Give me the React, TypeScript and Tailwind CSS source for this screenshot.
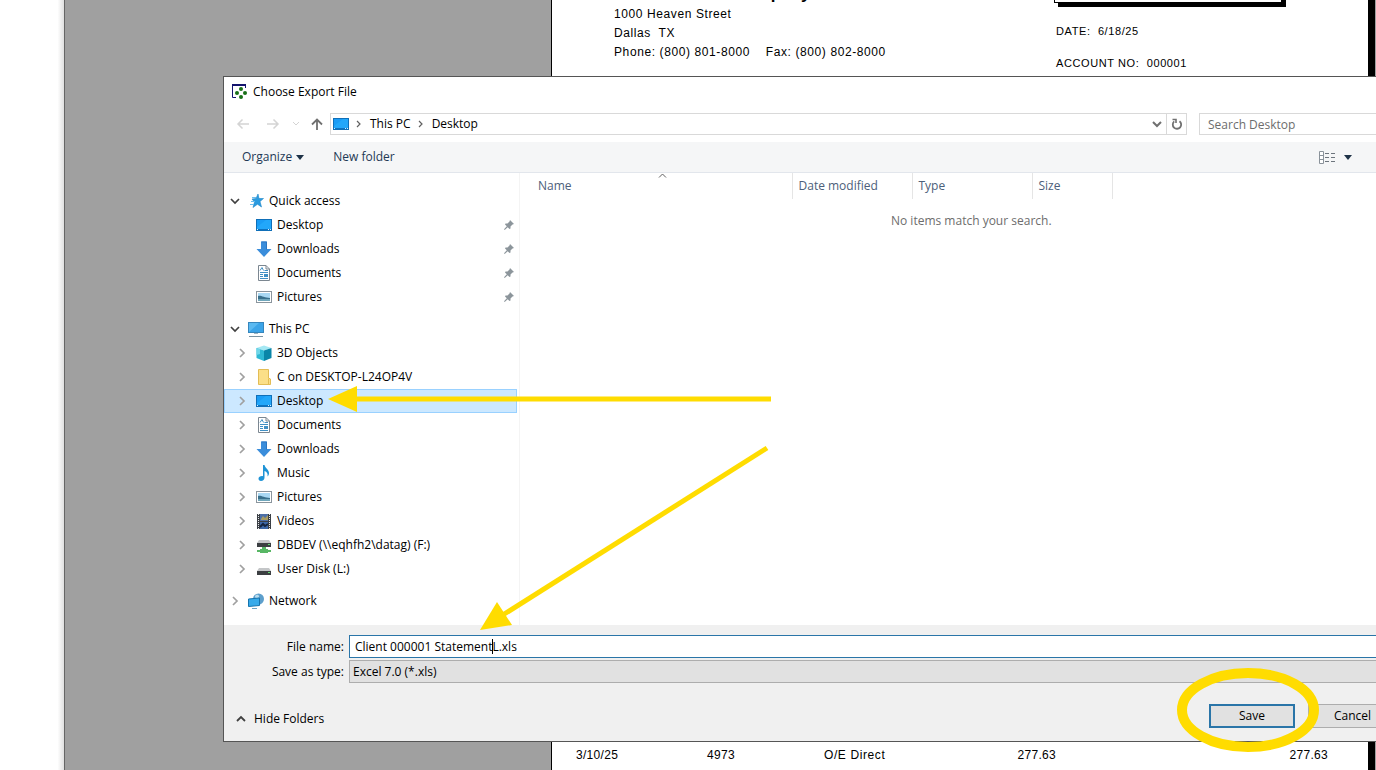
import type { ReactNode } from "react";

type Item = {
  label: string;
  icon: ReactNode;
};

function DesktopIcon() {
  return (
    <svg width="16" height="16" viewBox="0 0 16 16" className="shrink-0">
      <rect x="0.5" y="2.5" width="15" height="11" fill="#1a9cf5" stroke="#0f6fb8" />
      <path d="M1 10 L10 3 H15 V12 H1Z" fill="#22a7fa" />
      <path d="M1 12.5 H15" stroke="#0d72c0" />
      <path d="M1 12.5 H2 M12 12.5 H13 M14 12.5 H15" stroke="#d5efff" />
    </svg>
  );
}

function DownloadIcon() {
  return (
    <svg width="16" height="16" viewBox="0 0 16 16" className="shrink-0">
      <path d="M5 0.5 H11 V8 H15.5 L8 16 L0.5 8 H5Z" fill="#3a8ddb" />
      <path d="M5.5 1 H10.5 V8.5" fill="none" stroke="#2c76c2" />
    </svg>
  );
}

function DocumentIcon() {
  return (
    <svg width="16" height="16" viewBox="0 0 16 16" className="shrink-0">
      <path d="M2.5 0.5 H10 L13.5 4 V15.5 H2.5Z" fill="#fff" stroke="#7c8791" />
      <path d="M10 0.5 V4 H13.5" fill="none" stroke="#7c8791" />
      <path d="M4 5.5 L6 2.5 L7.5 5.5 M8.5 5.5 H12 M4 7.5 H12 M4 9.5 H7 M4 11.5 H7 M4 13.5 H12" fill="none" stroke="#3f8fc4" />
      <rect x="8" y="9" width="4" height="3" fill="#3f8fc4" />
    </svg>
  );
}

function PictureIcon() {
  return (
    <svg width="16" height="16" viewBox="0 0 16 16" className="shrink-0">
      <rect x="0.5" y="2.5" width="15" height="11" fill="#fff" stroke="#8b959d" />
      <rect x="2" y="4" width="12" height="8" fill="#a9d8f3" />
      <path d="M2 7 C5 6 8 9 14 9 V12 H2Z" fill="#39708c" />
      <path d="M2 10 H14 V12 H2Z" fill="#6fa6bb" />
    </svg>
  );
}

function MusicIcon() {
  return (
    <svg width="16" height="16" viewBox="0 0 16 16" className="shrink-0">
      <path d="M7 0 H8.5 C9 3 13 4.5 13 8 C13 9.5 12.5 10.5 11.5 11.5 C12 8.5 11 7 8.5 6 V12.5 C8.5 14.5 7 16 5 16 C3.3 16 2.5 15 2.5 13.8 C2.5 12 4.5 10.8 7 11.2Z" fill="#1e93d6" />
    </svg>
  );
}

function VideoIcon() {
  return (
    <svg width="16" height="16" viewBox="0 0 16 16" className="shrink-0">
      <rect x="1" y="1" width="14" height="15" fill="#3b3f45" />
      <path d="M2.5 1 V16 M13.5 1 V16" stroke="#e8eaec" strokeDasharray="1 1" />
      <rect x="4" y="1" width="8" height="7" fill="#4c6fa8" />
      <rect x="4" y="9" width="8" height="7" fill="#3c67a8" />
      <path d="M5 6 L7 3 L9 5 L12 2 V7 H5Z" fill="#a79b62" />
      <path d="M4 14 L7 11 L9 13 L12 11" fill="none" stroke="#14233d" strokeWidth="2" />
    </svg>
  );
}

function CubeIcon() {
  return (
    <svg width="16" height="16" viewBox="0 0 16 16" className="shrink-0">
      <path d="M8 0.5 L15.5 3 L8 5.5 L0.5 3Z" fill="#a5e8f3" />
      <path d="M0.5 3 L8 5.5 V16 L0.5 13Z" fill="#2fb9d4" />
      <path d="M8 5.5 L15.5 3 V13 L8 16Z" fill="#0a86a8" />
      <path d="M0.5 3 L4 4.2 V9 L0.5 10Z" fill="#6fd6e8" />
    </svg>
  );
}

function FolderIcon() {
  return (
    <svg width="16" height="16" viewBox="0 0 16 16" className="shrink-0">
      <path d="M2.5 0.5 H12.5 V9 L14.5 10 V15.5 H2.5Z" fill="#fbdf88" stroke="#e3bd55" />
      <path d="M12.5 9.5 V15" stroke="#e3bd55" />
    </svg>
  );
}

function DriveIcon({ network = false }: { network?: boolean }) {
  return (
    <svg width="16" height="16" viewBox="0 0 16 16" className="shrink-0">
      <g transform={network ? "translate(0 -4)" : undefined}>
        <path d="M3 7 H13 L15 10 H1Z" fill="#c4c6c8" />
        <rect x="1" y="10" width="14" height="4" fill="#3c3f42" />
        <rect x="12" y="11" width="2" height="1" fill="#62dd71" />
      </g>
      {network && (
        <path d="M6 10 H10 V12 H12 V13 H15 V15 H12 V16 H4 V15 H1 V13 H4 V12 H6Z" fill="#58b765" />
      )}
    </svg>
  );
}

function ComputerIcon() {
  return (
    <svg width="16" height="16" viewBox="0 0 16 16" className="shrink-0">
      <rect x="0.5" y="1.5" width="15" height="10" fill="#5ab9f1" stroke="#3686bd" />
      <path d="M1 11 L11 2 H15 V11Z" fill="#3ba4e8" />
      <path d="M6 12.5 H10" stroke="#9db4c1" />
      <path d="M1 15.5 H15" stroke="#7b93a1" />
    </svg>
  );
}

function StarIcon() {
  return (
    <svg width="16" height="16" viewBox="0 0 16 16" className="shrink-0">
      <path d="M10 1 L11 5.5 H15.5 L12 8.5 L13.5 14 L9.5 11.2 L5 14.5 L6.5 9 L4 6 L8 5.5Z" fill="#2a9be0" stroke="#1f86c8" strokeWidth="0.6" />
      <path d="M4 4.5 H8 M3 8.5 H7 M2 11.5 H6" stroke="#6bbced" />
    </svg>
  );
}

function NetworkIcon() {
  return (
    <svg width="16" height="16" viewBox="0 0 16 16" className="shrink-0">
      <circle cx="10.5" cy="6" r="5.5" fill="#5d9fcc" />
      <path d="M7 3 C9 0 13 3 10 5 C8 6 7 5 7 3Z" fill="#b9dcee" />
      <path d="M0.5 6 L11.5 5 V12.5 L0.5 13.5Z" fill="#37aaea" stroke="#1674ae" />
      <path d="M4 15.5 H9" stroke="#6ba3c4" />
    </svg>
  );
}

function PinIcon() {
  return (
    <svg width="10" height="10" viewBox="0 0 10 10" className="shrink-0">
      <path d="M6 0 L10 4 L8.5 4.5 L6.5 6.5 L6.5 8.5 L5.5 9 L3.7 7.2 L0.7 10 L0 9.3 L2.8 6.3 L1 4.5 L1.5 3.5 H3.5 L5.5 1.5Z" fill="#8c959b" />
    </svg>
  );
}

function Chevron({ open = false }: { open?: boolean }) {
  return (
    <svg width="10" height="10" viewBox="0 0 10 10" className="shrink-0">
      <path
        d={open ? "M1 3 L5 7 L9 3" : "M3 1 L7 5 L3 9"}
        fill="none"
        stroke={open ? "#404040" : "#a0a0a0"}
        strokeWidth="1.7"
      />
    </svg>
  );
}

function Caret() {
  return (
    <svg width="8" height="5" viewBox="0 0 8 5">
      <path d="M0 0 H8 L4 5Z" fill="#1e3247" />
    </svg>
  );
}

const quickAccess: Item[] = [
  { label: "Desktop", icon: <DesktopIcon /> },
  { label: "Downloads", icon: <DownloadIcon /> },
  { label: "Documents", icon: <DocumentIcon /> },
  { label: "Pictures", icon: <PictureIcon /> },
];

const thisPc: Item[] = [
  { label: "3D Objects", icon: <CubeIcon /> },
  { label: "C on DESKTOP-L24OP4V", icon: <FolderIcon /> },
  { label: "Desktop", icon: <DesktopIcon /> },
  { label: "Documents", icon: <DocumentIcon /> },
  { label: "Downloads", icon: <DownloadIcon /> },
  { label: "Music", icon: <MusicIcon /> },
  { label: "Pictures", icon: <PictureIcon /> },
  { label: "Videos", icon: <VideoIcon /> },
  { label: "DBDEV (\\\\eqhfh2\\datag) (F:)", icon: <DriveIcon network /> },
  { label: "User Disk (L:)", icon: <DriveIcon /> },
];

function RootRow({ label, icon, open = false }: Item & { open?: boolean }) {
  return (
    <button type="button" className="flex h-6 w-full items-center pl-[6px] text-left">
      <Chevron open={open} />
      <span className="ml-2 flex">{icon}</span>
      <span className="ml-[5px]">{label}</span>
    </button>
  );
}

function Sidebar() {
  return (
    <nav className="w-[296px] shrink-0 border-r border-[#f4f4f4] pt-4 pr-[2px]">
      <RootRow label="Quick access" icon={<StarIcon />} open />
      <ul>
        {quickAccess.map((item) => (
          <li key={item.label}>
            <button type="button" className="flex h-6 w-full items-center pr-[3px] pl-8 text-left">
              {item.icon}
              <span className="ml-[5px] flex-1">{item.label}</span>
              <PinIcon />
            </button>
          </li>
        ))}
      </ul>
      <div className="pt-2">
        <RootRow label="This PC" icon={<ComputerIcon />} open />
        <ul>
          {thisPc.map((item) => (
            <li key={item.label}>
              <button
                type="button"
                className={
                  item.label === "Desktop"
                    ? "flex h-6 w-full items-center border border-[#99d1ff] bg-[#cce8ff] pl-3 text-left"
                    : "flex h-6 w-full items-center border border-transparent pl-3 text-left"
                }
              >
                <Chevron />
                <span className="ml-[9px] flex">{item.icon}</span>
                <span className="ml-[5px]">{item.label}</span>
              </button>
            </li>
          ))}
        </ul>
      </div>
      <div className="pt-2">
        <RootRow label="Network" icon={<NetworkIcon />} />
      </div>
    </nav>
  );
}

function Crumb() {
  return (
    <svg width="21" height="8" viewBox="0 0 21 8" className="shrink-0">
      <path d="M8 1 L11 4 L8 7" fill="none" stroke="#606060" strokeWidth="1.2" />
    </svg>
  );
}

function AddressBar() {
  return (
    <div className="flex h-[22px] items-center">
      <div className="flex w-[106px] shrink-0 items-center pl-3">
        <button type="button" aria-label="Back">
          <svg width="14" height="12" viewBox="0 0 14 12">
            <path d="M13 6 H2 M6.5 1.5 L2 6 L6.5 10.5" fill="none" stroke="#d4d4d4" strokeWidth="1.5" />
          </svg>
        </button>
        <button type="button" aria-label="Forward" className="ml-4">
          <svg width="14" height="12" viewBox="0 0 14 12">
            <path d="M1 6 H12 M7.5 1.5 L12 6 L7.5 10.5" fill="none" stroke="#d4d4d4" strokeWidth="1.5" />
          </svg>
        </button>
        <button type="button" aria-label="Recent locations" className="ml-3">
          <svg width="8" height="6" viewBox="0 0 8 6">
            <path d="M1 1 L4 4 L7 1" fill="none" stroke="#d4d4d4" />
          </svg>
        </button>
        <button type="button" aria-label="Up" className="ml-[11px]">
          <svg width="12" height="12" viewBox="0 0 12 12">
            <path d="M6 12 V1.5 M1 6.5 L6 1.5 L11 6.5" fill="none" stroke="#707070" strokeWidth="1.8" />
          </svg>
        </button>
      </div>
      <div className="flex h-full w-full max-w-[857px] items-center border border-[#d9d9d9] pl-[2px]">
        <DesktopIcon />
        <Crumb />
        <button type="button">This PC</button>
        <Crumb />
        <button type="button">Desktop</button>
        <button type="button" aria-label="Previous locations" className="mr-1 ml-auto">
          <svg width="10" height="8" viewBox="0 0 10 8">
            <path d="M1 2 L5 6 L9 2" fill="none" stroke="#707070" strokeWidth="2" />
          </svg>
        </button>
        <button type="button" aria-label="Refresh" className="flex h-full w-5 items-center justify-center border-l border-[#d9d9d9]">
          <svg width="12" height="12" viewBox="0 0 12 12">
            <path d="M8.5 3.2 A4.2 4.2 0 1 1 3.2 3.4" fill="none" stroke="#707070" strokeWidth="1.8" />
            <path d="M1.5 1.5 H5 V5" fill="none" stroke="#707070" strokeWidth="1.6" />
          </svg>
        </button>
      </div>
      <input
        type="search"
        aria-label="Search Desktop"
        placeholder="Search Desktop"
        className="ml-3 h-full min-w-[177px] flex-1 border border-r-0 border-[#d9d9d9] px-2 outline-none placeholder:text-[#6d6d6d]"
      />
    </div>
  );
}

function FileList() {
  return (
    <section className="min-w-0 flex-1">
      <table className="table-fixed text-left text-[#4c607a]">
        <thead>
          <tr className="h-[26px]">
            <th className="relative w-[272px] border-r border-[#e5e5e5] pl-[18px] font-normal">
              Name
              <svg width="9" height="5" viewBox="0 0 9 5" className="absolute top-0 left-[138px]">
                <path d="M1 4.5 L4.5 1 L8 4.5" fill="none" stroke="#606060" />
              </svg>
            </th>
            <th className="w-[120px] border-r border-[#e5e5e5] pl-[6px] font-normal">Date modified</th>
            <th className="w-[120px] border-r border-[#e5e5e5] pl-[6px] font-normal">Type</th>
            <th className="w-[80px] border-r border-[#e5e5e5] pl-[6px] font-normal">Size</th>
          </tr>
        </thead>
      </table>
      <p className="mt-[14px] pl-[371px] text-[#6d6d6d]">No items match your search.</p>
    </section>
  );
}

function SaveForm() {
  return (
    <form className="bg-[#f0f0f0] pt-[10px] pb-[13px]" onSubmit={(e) => e.preventDefault()}>
      <div className="flex items-center">
        <label htmlFor="file-name" className="w-[125px] shrink-0 pr-[5px] text-right">
          File name:
        </label>
        <div className="relative flex-1">
          <input
            id="file-name"
            type="text"
            defaultValue="Client 000001 StatementL.xls"
            className="block h-[23px] w-full border border-r-0 border-[#2a75a8] bg-white pl-[5px] outline-none"
          />
          {/* text cursor */}
          <span className="absolute top-1 left-[143px] h-[15px] w-px bg-black" />
        </div>
      </div>
      <div className="mt-[2px] flex items-center">
        <label htmlFor="file-type" className="w-[125px] shrink-0 pr-[5px] text-right">
          Save as type:
        </label>
        <select id="file-type" className="h-[23px] flex-1 appearance-none border border-r-0 border-[#adadad] bg-[#e1e1e1] pl-[3px] outline-none">
          <option>Excel 7.0 (*.xls)</option>
        </select>
      </div>
      <div className="mt-[21px] flex h-6 items-center">
        <button type="button" className="mt-[6px] flex items-center pl-3">
          <svg width="10" height="8" viewBox="0 0 10 8">
            <path d="M1 6 L5 2 L9 6" fill="none" stroke="#404040" strokeWidth="1.8" />
          </svg>
          <span className="ml-2">Hide Folders</span>
        </button>
        <button type="submit" className="ml-auto h-6 w-[86px] border-2 border-[#2a75a8] bg-[#e1e1e1]">
          Save
        </button>
        <button type="button" className="ml-[13px] h-6 w-[68px] border border-r-0 border-[#adadad] bg-[#e1e1e1] pl-5">
          Cancel
        </button>
      </div>
    </form>
  );
}

function ExportDialog() {
  return (
    <div
      role="dialog"
      aria-label="Choose Export File"
      className="absolute top-[76px] right-0 left-[223px] border border-r-0 border-[#555] bg-white font-['Open_Sans','Noto_Sans',sans-serif] text-[12px] leading-4 text-black"
    >
      <header className="flex h-[36px] items-center px-2 pb-[6px]">
        <svg width="16" height="16" viewBox="0 0 16 16">
          <path d="M13.5 1 V4 M0.5 1 V13.5 H4" fill="none" stroke="#14146e" />
          <path d="M0 1 H14" stroke="#14146e" strokeWidth="2" />
          <g fill="#187018">
            <circle cx="9" cy="5" r="2" />
            <circle cx="5" cy="9" r="2" />
            <circle cx="13" cy="9" r="2" />
            <circle cx="9" cy="13" r="2" />
          </g>
        </svg>
        <h1 className="ml-[5px]">Choose Export File</h1>
      </header>
      <AddressBar />
      <div className="mt-[7px] flex h-[31px] items-center border-b border-[#e2e6ec] bg-[#f5f6f7] pr-6 pl-[18px] text-[#1e3955]">
        <button type="button" className="flex items-center gap-1">
          Organize
          <Caret />
        </button>
        <button type="button" className="ml-[29px]">New folder</button>
        <button type="button" aria-label="Change your view" className="ml-auto flex items-center gap-2">
          <svg width="17" height="13" viewBox="0 0 17 13">
            <path d="M0.5 0.5 H4.5 V12.5 H0.5Z M0.5 4.5 H4.5 M0.5 8.5 H4.5" fill="#fff" stroke="#8a929a" />
            <path d="M6 2.5 H16 M6 6.5 H16 M6 10.5 H16" stroke="#6d757d" strokeDasharray="4 2" />
          </svg>
          <Caret />
        </button>
      </div>
      <div className="flex h-[452px]">
        <Sidebar />
        <FileList />
      </div>
      <SaveForm />
    </div>
  );
}

function Statement() {
  return (
    <main className="flex flex-1 flex-col justify-between border-r-[7px] border-l border-black bg-white font-['Liberation_Sans',Arial,sans-serif] text-[12px] leading-4 text-black">
      <div className="flex pl-[62px] tracking-wider">
        <div className="w-[440px]">
          <h2 className="-mt-[17px] text-[17px] leading-[22px] font-bold tracking-normal">Heaven Credit Company</h2>
          <p className="leading-[19px]">1000 Heaven Street</p>
          <p className="leading-[19px]">Dallas&nbsp; TX</p>
          <p className="leading-[19px]">Phone: (800) 801-8000 &nbsp; &nbsp;Fax: (800) 802-8000</p>
        </div>
        <div className="text-[11px]">
          <div className="-mt-5 h-[23px] w-[228px] border border-black bg-white shadow-[4px_4px_0_0_#000]" />
          <p className="mt-5 pl-[2px]">DATE:&nbsp; 6/18/25</p>
          <p className="mt-4 pl-[2px]">ACCOUNT NO:&nbsp; 000001</p>
        </div>
      </div>
      <table className="mb-[7px] w-full table-fixed tracking-wide">
        <tbody>
          <tr>
            <td className="w-[155px] pl-6">3/10/25</td>
            <td className="w-[117px]">4973</td>
            <td className="w-[154px] tracking-wider">O/E Direct</td>
            <td className="w-[78px] text-right">277.63</td>
            <td className="pr-10 text-right">277.63</td>
          </tr>
        </tbody>
      </table>
    </main>
  );
}

export default function App() {
  return (
    <div className="relative flex min-h-screen overflow-hidden bg-white">
      <div className="w-[65px] shrink-0 border-r border-[#666] bg-linear-to-r from-white from-90% to-[#e0e0e0]" />
      <div className="w-[486px] shrink-0 bg-[#a0a0a0]" />
      <Statement />
      <div className="w-px shrink-0 bg-[#a0a0a0]" />
      <ExportDialog />
      <svg width="1376" height="770" viewBox="0 0 1376 770" className="pointer-events-none absolute top-0 left-0">
        <g fill="none" stroke="#ffdc00">
          <path d="M771 399 H350" strokeWidth="5" />
          <path d="M767 448 L498 618" strokeWidth="5" />
          <ellipse cx="1248" cy="710" rx="66" ry="37" strokeWidth="10" />
        </g>
        <path d="M328 399 L357 386 V412Z" fill="#ffdc00" />
        <path d="M480 630 L497 602 L512 625Z" fill="#ffdc00" />
      </svg>
    </div>
  );
}
